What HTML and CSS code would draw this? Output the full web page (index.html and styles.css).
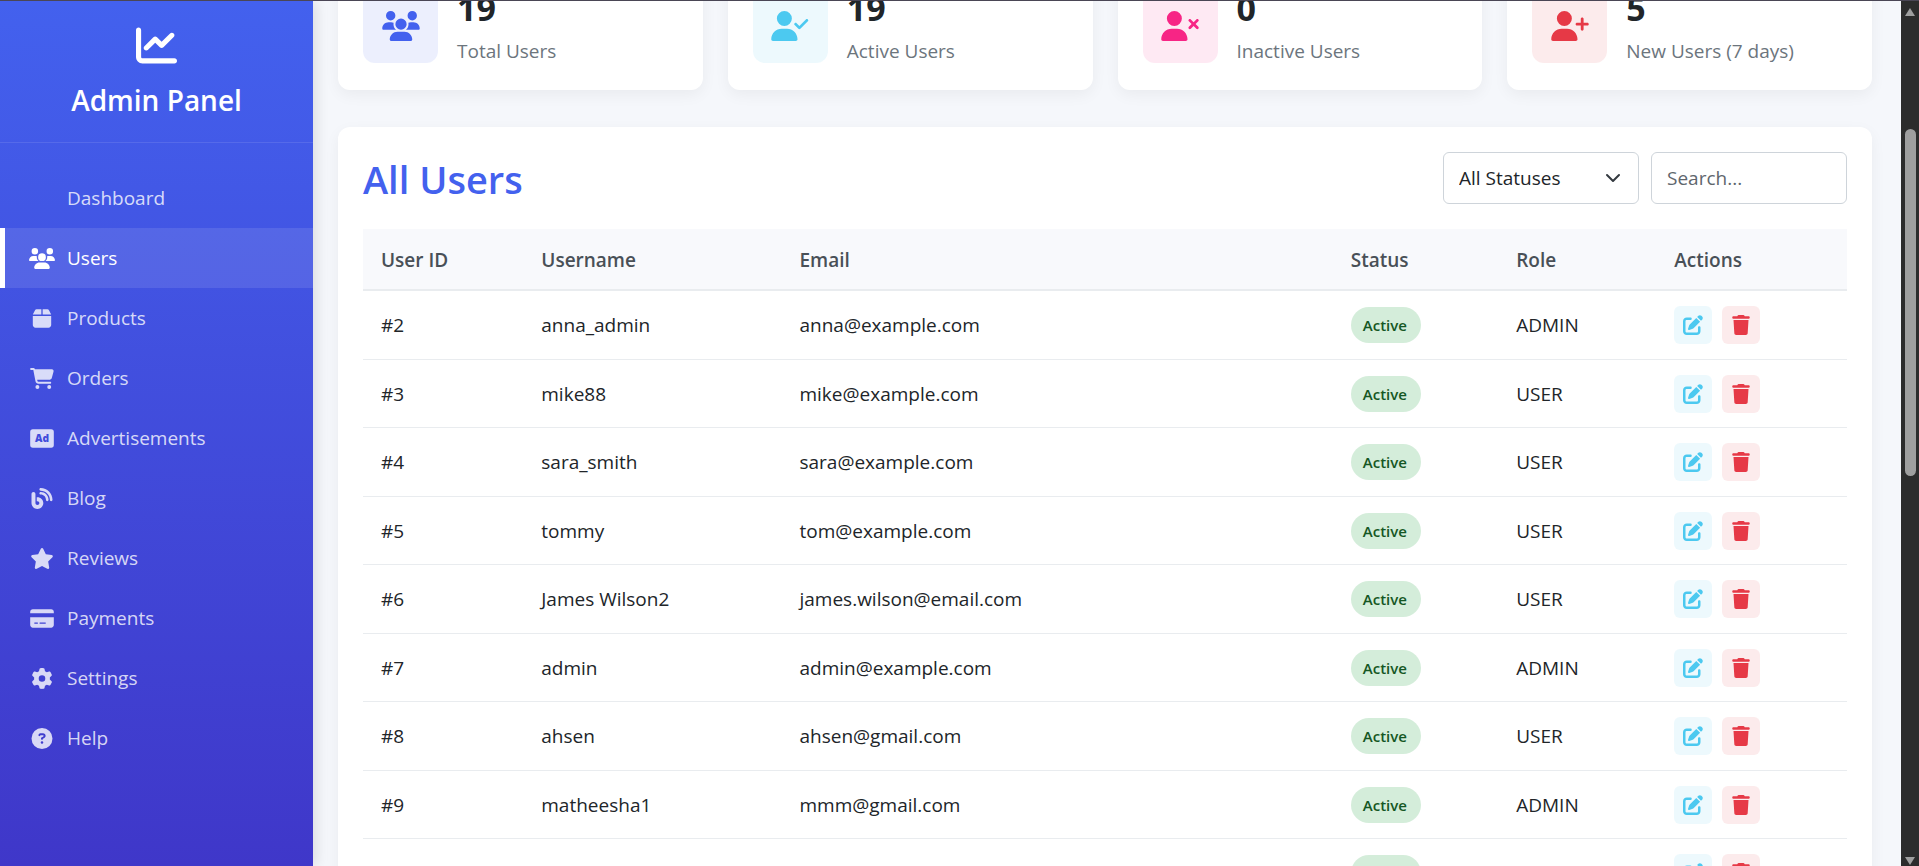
FILE: index.html
```html
<!DOCTYPE html>
<html lang="en">
<head>
<meta charset="utf-8">
<meta name="viewport" content="width=device-width, initial-scale=1">
<title>Admin Panel - Users</title>
<link rel="stylesheet" href="styles.css">
</head>
<body>
<svg class="sprite" aria-hidden="true">
  <symbol id="i-chart" viewBox="0 0 512 512"><path d="M64 64c0-17.700-14.300-32-32-32S0 46.300 0 64V400c0 44.200 35.800 80 80 80H480c17.700 0 32-14.300 32-32s-14.300-32-32-32H80c-8.800 0-16-7.200-16-16V64zm406.600 86.600c12.500-12.500 12.500-32.800 0-45.300s-32.800-12.500-45.300 0L320 210.700l-57.400-57.400c-12.500-12.500-32.800-12.500-45.300 0l-112 112c-12.500 12.500-12.500 32.800 0 45.300s32.800 12.500 45.300 0L240 221.300l57.400 57.400c12.500 12.500 32.800 12.500 45.300 0l128-128z"/></symbol>
  <symbol id="i-users" viewBox="0 0 640 512"><path d="M144 0a80 80 0 1 1 0 160A80 80 0 1 1 144 0zM512 0a80 80 0 1 1 0 160A80 80 0 1 1 512 0zM0 298.700C0 239.800 47.800 192 106.700 192h42.700c15.900 0 31 3.500 44.600 9.700c-1.300 7.200-1.900 14.700-1.900 22.300c0 38.200 16.800 72.500 43.300 96c-.2 0-.4 0-.7 0H21.300C9.600 320 0 310.400 0 298.700zM405.300 320c-.2 0-.4 0-.7 0c26.600-23.500 43.300-57.800 43.300-96c0-7.600-.7-15-1.900-22.300c13.600-6.300 28.700-9.700 44.600-9.700h42.700C592.200 192 640 239.800 640 298.700c0 11.800-9.600 21.300-21.300 21.300H405.300zM224 224a96 96 0 1 1 192 0 96 96 0 1 1 -192 0zM128 485.300C128 411.700 187.700 352 261.300 352H378.700C452.300 352 512 411.700 512 485.300c0 14.700-11.900 26.700-26.700 26.700H154.700c-14.700 0-26.700-11.900-26.700-26.700z"/></symbol>
  <symbol id="i-user-check" viewBox="0 0 640 512"><path d="M96 128a128 128 0 1 1 256 0A128 128 0 1 1 96 128zM0 482.300C0 383.800 79.800 304 178.300 304h91.400C368.200 304 448 383.800 448 482.300c0 16.400-13.300 29.700-29.700 29.700H29.700C13.300 512 0 498.700 0 482.300zM625 177L497 305c-9.400 9.400-24.600 9.400-33.900 0l-64-64c-9.400-9.400-9.400-24.600 0-33.900s24.600-9.400 33.900 0l47 47L591 143c9.400-9.400 24.600-9.400 33.900 0s9.400 24.600 0 33.900z"/></symbol>
  <symbol id="i-user-x" viewBox="0 0 640 512"><path d="M96 128a128 128 0 1 1 256 0A128 128 0 1 1 96 128zM0 482.300C0 383.800 79.800 304 178.300 304h91.400C368.200 304 448 383.800 448 482.300c0 16.400-13.300 29.700-29.700 29.700H29.700C13.300 512 0 498.700 0 482.300zM471 143c9.400-9.400 24.600-9.400 33.900 0l47 47 47-47c9.400-9.400 24.600-9.400 33.900 0s9.400 24.600 0 33.900l-47 47 47 47c9.400 9.400 9.400 24.600 0 33.900s-24.600 9.400-33.900 0l-47-47-47 47c-9.400 9.400-24.600 9.400-33.900 0s-9.400-24.600 0-33.900l47-47-47-47c-9.400-9.400-9.400-24.600 0-33.900z"/></symbol>
  <symbol id="i-user-plus" viewBox="0 0 640 512"><path d="M96 128a128 128 0 1 1 256 0A128 128 0 1 1 96 128zM0 482.300C0 383.800 79.800 304 178.300 304h91.400C368.200 304 448 383.800 448 482.300c0 16.400-13.300 29.700-29.700 29.700H29.700C13.300 512 0 498.700 0 482.300zM504 312V248H440c-13.300 0-24-10.700-24-24s10.700-24 24-24h64V136c0-13.300 10.700-24 24-24s24 10.700 24 24v64h64c13.300 0 24 10.700 24 24s-10.700 24-24 24H552v64c0 13.300-10.700 24-24 24s-24-10.700-24-24z"/></symbol>
  <symbol id="i-box" viewBox="0 0 448 512"><path d="M50.700 58.500L0 160H208V32H93.700C75.500 32 58.900 42.300 50.700 58.500zM240 160H448L397.300 58.500C389.100 42.300 372.500 32 354.300 32H240V160zm208 32H0V416c0 35.300 28.700 64 64 64H384c35.300 0 64-28.700 64-64V192z"/></symbol>
  <symbol id="i-cart" viewBox="0 0 576 512"><path d="M0 24C0 10.700 10.700 0 24 0H69.500c22 0 41.500 12.800 50.600 32h411c26.300 0 45.500 25 38.600 50.400l-41 152.300c-8.500 31.400-37 53.300-69.500 53.300H170.700l5.400 28.500c2.200 11.300 12.100 19.500 23.600 19.500H488c13.300 0 24 10.700 24 24s-10.700 24-24 24H199.700c-34.600 0-64.300-24.600-70.700-58.500L77.400 54.500c-.7-3.800-4-6.500-7.900-6.500H24C10.700 48 0 37.300 0 24zM128 464a48 48 0 1 1 96 0 48 48 0 1 1 -96 0zm336-48a48 48 0 1 1 0 96 48 48 0 1 1 0-96z"/></symbol>
  <symbol id="i-blog" viewBox="0 0 512 512"><path d="M192 32c0 17.700 14.300 32 32 32c123.700 0 224 100.300 224 224c0 17.700 14.300 32 32 32s32-14.300 32-32C512 128.900 383.100 0 224 0c-17.700 0-32 14.300-32 32zm0 96c0 17.700 14.300 32 32 32c70.700 0 128 57.300 128 128c0 17.700 14.300 32 32 32s32-14.300 32-32c0-106-86-192-192-192c-17.700 0-32 14.300-32 32zM96 144c0-26.500-21.500-48-48-48S0 117.500 0 144V368c0 79.500 64.500 144 144 144s144-64.500 144-144s-64.500-144-144-144H128v96h16c26.500 0 48 21.500 48 48s-21.500 48-48 48s-48-21.500-48-48V144z"/></symbol>
  <symbol id="i-star" viewBox="0 0 576 512"><path d="M316.900 18C311.600 7 300.400 0 288.100 0s-23.400 7-28.800 18L195 150.300 51.400 171.500c-12 1.800-22 10.200-25.700 21.700s-.7 24.200 7.900 32.700L137.800 329 113.200 474.700c-2 12 3 24.200 12.900 31.300s23 8 33.800 2.300l128.300-68.500 128.300 68.500c10.800 5.700 23.900 4.900 33.800-2.300s14.900-19.300 12.900-31.300L438.500 329 542.700 225.900c8.600-8.500 11.700-21.200 7.900-32.700s-13.700-19.900-25.700-21.700L381.200 150.300 316.900 18z"/></symbol>
  <symbol id="i-card" viewBox="0 0 576 512"><path d="M64 32C28.700 32 0 60.700 0 96v32H576V96c0-35.300-28.700-64-64-64H64zM576 224H0V416c0 35.300 28.700 64 64 64H512c35.300 0 64-28.700 64-64V224zM112 352h64c8.800 0 16 7.200 16 16s-7.200 16-16 16H112c-8.800 0-16-7.200-16-16s7.200-16 16-16zm112 16c0-8.800 7.200-16 16-16H368c8.800 0 16 7.200 16 16s-7.200 16-16 16H240c-8.800 0-16-7.200-16-16z"/></symbol>
  <symbol id="i-gear" viewBox="0 0 512 512"><path d="M495.900 166.600c3.200 8.700 .5 18.400-6.400 24.600l-43.300 39.400c1.100 8.300 1.700 16.800 1.700 25.400s-.6 17.100-1.700 25.400l43.300 39.400c6.900 6.200 9.600 15.900 6.400 24.600c-4.400 11.900-9.700 23.300-15.800 34.300l-4.700 8.100c-6.600 11-14 21.400-22.100 31.200c-5.900 7.200-15.700 9.600-24.500 6.800l-55.700-17.700c-13.400 10.300-28.200 18.900-44 25.400l-12.500 57.100c-2 9.100-9 16.300-18.200 17.800c-13.800 2.300-28 3.500-42.500 3.500s-28.700-1.200-42.500-3.500c-9.200-1.500-16.200-8.700-18.200-17.800l-12.500-57.100c-15.800-6.500-30.600-15.100-44-25.400L83.100 425.900c-8.800 2.800-18.600 .3-24.500-6.800c-8.100-9.800-15.500-20.200-22.100-31.200l-4.700-8.100c-6.100-11-11.400-22.400-15.800-34.300c-3.200-8.700-.5-18.400 6.400-24.600l43.300-39.400C64.600 273.100 64 264.600 64 256s.6-17.100 1.700-25.400L22.400 191.200c-6.900-6.200-9.600-15.900-6.400-24.600c4.400-11.900 9.700-23.300 15.800-34.300l4.700-8.100c6.600-11 14-21.400 22.100-31.200c5.900-7.200 15.700-9.600 24.500-6.800l55.700 17.700c13.400-10.300 28.200-18.900 44-25.400l12.500-57.100c2-9.100 9-16.300 18.200-17.800C227.300 1.200 241.500 0 256 0s28.700 1.200 42.500 3.500c9.200 1.500 16.200 8.700 18.200 17.800l12.500 57.100c15.800 6.500 30.600 15.100 44 25.400l55.700-17.700c8.800-2.800 18.600-.3 24.500 6.800c8.100 9.800 15.500 20.200 22.100 31.200l4.700 8.100c6.100 11 11.400 22.400 15.800 34.300zM256 336a80 80 0 1 0 0-160 80 80 0 1 0 0 160z"/></symbol>
  <symbol id="i-help" viewBox="0 0 512 512"><path d="M256 512A256 256 0 1 0 256 0a256 256 0 1 0 0 512zM169.800 165.300c7.900-22.300 29.100-37.300 52.800-37.300h58.300c34.900 0 63.100 28.300 63.100 63.100c0 22.600-12.100 43.500-31.700 54.800L280 264.400c-.2 13-10.900 23.600-24 23.600c-13.300 0-24-10.700-24-24V250.500c0-8.600 4.600-16.500 12.100-20.800l44.300-25.400c4.700-2.700 7.600-7.700 7.600-13.100c0-8.400-6.800-15.100-15.100-15.100H222.600c-3.400 0-6.400 2.100-7.500 5.300l-.4 1.200c-4.400 12.500-18.200 19-30.600 14.600s-19-18.200-14.600-30.600l.4-1.200zM224 352a32 32 0 1 1 64 0 32 32 0 1 1 -64 0z"/></symbol>
  <symbol id="i-edit" viewBox="0 0 512 512"><path d="M471.600 21.700c-21.900-21.900-57.300-21.900-79.200 0L362.300 51.700l97.900 97.900 30.100-30.100c21.900-21.900 21.900-57.300 0-79.200L471.600 21.700zm-299.200 220c-6.100 6.100-10.800 13.600-13.500 21.900l-29.600 88.800c-2.900 8.600-.6 18.100 5.800 24.600s15.900 8.700 24.600 5.800l88.800-29.600c8.200-2.700 15.700-7.400 21.900-13.500L437.700 172.300 339.700 74.300 172.400 241.700zM96 64C43 64 0 107 0 160V416c0 53 43 96 96 96H352c53 0 96-43 96-96V320c0-17.700-14.300-32-32-32s-32 14.300-32 32v96c0 17.700-14.300 32-32 32H96c-17.700 0-32-14.300-32-32V160c0-17.700 14.300-32 32-32h96c17.700 0 32-14.300 32-32s-14.300-32-32-32H96z"/></symbol>
  <symbol id="i-trash" viewBox="0 0 448 512"><path d="M135.200 17.700L128 32H32C14.300 32 0 46.300 0 64S14.300 96 32 96H416c17.700 0 32-14.300 32-32s-14.300-32-32-32H320l-7.200-14.300C307.400 6.800 296.300 0 284.200 0H163.800c-12.100 0-23.200 6.800-28.600 17.700zM416 128H32L53.200 467c1.600 25.300 22.600 45 47.900 45H346.900c25.300 0 46.300-19.700 47.900-45L416 128z"/></symbol>
</svg>

<aside class="sidebar">
  <div class="brand">
    <svg class="brand-icon" aria-hidden="true"><use href="#i-chart"/></svg>
    <h2 class="brand-name">Admin Panel</h2>
  </div>
  <nav class="nav">
    <a class="nav-link" href="#"><span class="nav-icon"></span>Dashboard</a>
    <a class="nav-link active" href="#" aria-current="page"><svg class="nav-icon" aria-hidden="true"><use href="#i-users"/></svg>Users</a>
    <a class="nav-link" href="#"><svg class="nav-icon" aria-hidden="true"><use href="#i-box"/></svg>Products</a>
    <a class="nav-link" href="#"><svg class="nav-icon" aria-hidden="true"><use href="#i-cart"/></svg>Orders</a>
    <a class="nav-link" href="#"><svg class="nav-icon" viewBox="0 0 576 512" aria-hidden="true"><rect y="32" width="576" height="448" rx="64"/><text class="ad-text" x="288" y="346" text-anchor="middle">Ad</text></svg>Advertisements</a>
    <a class="nav-link" href="#"><svg class="nav-icon" aria-hidden="true"><use href="#i-blog"/></svg>Blog</a>
    <a class="nav-link" href="#"><svg class="nav-icon" aria-hidden="true"><use href="#i-star"/></svg>Reviews</a>
    <a class="nav-link" href="#"><svg class="nav-icon" aria-hidden="true"><use href="#i-card"/></svg>Payments</a>
    <a class="nav-link" href="#"><svg class="nav-icon" aria-hidden="true"><use href="#i-gear"/></svg>Settings</a>
    <a class="nav-link" href="#"><svg class="nav-icon" aria-hidden="true"><use href="#i-help"/></svg>Help</a>
  </nav>
</aside>

<main class="main">
  <section class="stats">
    <div class="stat">
      <div class="stat-icon blue"><svg aria-hidden="true"><use href="#i-users"/></svg></div>
      <div><h3 class="stat-value">19</h3><p class="stat-label">Total Users</p></div>
    </div>
    <div class="stat">
      <div class="stat-icon cyan"><svg aria-hidden="true"><use href="#i-user-check"/></svg></div>
      <div><h3 class="stat-value">19</h3><p class="stat-label">Active Users</p></div>
    </div>
    <div class="stat">
      <div class="stat-icon pink"><svg aria-hidden="true"><use href="#i-user-x"/></svg></div>
      <div><h3 class="stat-value">0</h3><p class="stat-label">Inactive Users</p></div>
    </div>
    <div class="stat">
      <div class="stat-icon red"><svg aria-hidden="true"><use href="#i-user-plus"/></svg></div>
      <div><h3 class="stat-value">5</h3><p class="stat-label">New Users (7 days)</p></div>
    </div>
  </section>

  <section class="panel">
    <header class="panel-head">
      <h2 class="panel-title">All Users</h2>
      <div class="filters">
        <div class="select-wrap">
          <select class="field" aria-label="Filter by status">
            <option>All Statuses</option>
            <option>Active</option>
            <option>Inactive</option>
          </select>
          <svg class="chevron" viewBox="0 0 16 16" aria-hidden="true"><path d="m2 5 6 6 6-6"/></svg>
        </div>
        <input class="field" type="text" placeholder="Search..." aria-label="Search users">
      </div>
    </header>

    <table class="users">
      <colgroup><col class="c-id"><col class="c-name"><col class="c-email"><col class="c-status"><col class="c-role"><col class="c-actions"></colgroup>
      <thead>
        <tr><th>User ID</th><th>Username</th><th>Email</th><th>Status</th><th>Role</th><th>Actions</th></tr>
      </thead>
      <tbody>
        <tr><td>#2</td><td>anna_admin</td><td>anna@example.com</td><td><span class="badge">Active</span></td><td>ADMIN</td><td><div class="actions"><button class="btn cyan" aria-label="Edit"><svg aria-hidden="true"><use href="#i-edit"/></svg></button><button class="btn red" aria-label="Delete"><svg aria-hidden="true"><use href="#i-trash"/></svg></button></div></td></tr>
        <tr><td>#3</td><td>mike88</td><td>mike@example.com</td><td><span class="badge">Active</span></td><td>USER</td><td><div class="actions"><button class="btn cyan" aria-label="Edit"><svg aria-hidden="true"><use href="#i-edit"/></svg></button><button class="btn red" aria-label="Delete"><svg aria-hidden="true"><use href="#i-trash"/></svg></button></div></td></tr>
        <tr><td>#4</td><td>sara_smith</td><td>sara@example.com</td><td><span class="badge">Active</span></td><td>USER</td><td><div class="actions"><button class="btn cyan" aria-label="Edit"><svg aria-hidden="true"><use href="#i-edit"/></svg></button><button class="btn red" aria-label="Delete"><svg aria-hidden="true"><use href="#i-trash"/></svg></button></div></td></tr>
        <tr><td>#5</td><td>tommy</td><td>tom@example.com</td><td><span class="badge">Active</span></td><td>USER</td><td><div class="actions"><button class="btn cyan" aria-label="Edit"><svg aria-hidden="true"><use href="#i-edit"/></svg></button><button class="btn red" aria-label="Delete"><svg aria-hidden="true"><use href="#i-trash"/></svg></button></div></td></tr>
        <tr><td>#6</td><td>James Wilson2</td><td>james.wilson@email.com</td><td><span class="badge">Active</span></td><td>USER</td><td><div class="actions"><button class="btn cyan" aria-label="Edit"><svg aria-hidden="true"><use href="#i-edit"/></svg></button><button class="btn red" aria-label="Delete"><svg aria-hidden="true"><use href="#i-trash"/></svg></button></div></td></tr>
        <tr><td>#7</td><td>admin</td><td>admin@example.com</td><td><span class="badge">Active</span></td><td>ADMIN</td><td><div class="actions"><button class="btn cyan" aria-label="Edit"><svg aria-hidden="true"><use href="#i-edit"/></svg></button><button class="btn red" aria-label="Delete"><svg aria-hidden="true"><use href="#i-trash"/></svg></button></div></td></tr>
        <tr><td>#8</td><td>ahsen</td><td>ahsen@gmail.com</td><td><span class="badge">Active</span></td><td>USER</td><td><div class="actions"><button class="btn cyan" aria-label="Edit"><svg aria-hidden="true"><use href="#i-edit"/></svg></button><button class="btn red" aria-label="Delete"><svg aria-hidden="true"><use href="#i-trash"/></svg></button></div></td></tr>
        <tr><td>#9</td><td>matheesha1</td><td>mmm@gmail.com</td><td><span class="badge">Active</span></td><td>ADMIN</td><td><div class="actions"><button class="btn cyan" aria-label="Edit"><svg aria-hidden="true"><use href="#i-edit"/></svg></button><button class="btn red" aria-label="Delete"><svg aria-hidden="true"><use href="#i-trash"/></svg></button></div></td></tr>
        <tr><td></td><td></td><td></td><td><span class="badge"></span></td><td></td><td><div class="actions"><button class="btn cyan" aria-label="Edit"><svg aria-hidden="true"><use href="#i-edit"/></svg></button><button class="btn red" aria-label="Delete"><svg aria-hidden="true"><use href="#i-trash"/></svg></button></div></td></tr>
      </tbody>
    </table>
  </section>
</main>

<div class="scrollbar" aria-hidden="true">
  <svg class="arrow" viewBox="0 0 12 10"><path d="M6 1 11 9H1z"/></svg>
  <div class="track"><div class="thumb"></div></div>
  <svg class="arrow" viewBox="0 0 12 10"><path d="M6 9 1 1H11z"/></svg>
</div>
</body>
</html>
```

FILE: styles.css
```css
:root {
  --primary: #4361ee;
  --primary-dark: #3f37c9;
  --page: #f5f7fb;
  --ink: #212529;
  --muted: #6c757d;
  --line: #e9ecef;
}

* {
  box-sizing: border-box;
}

body {
  display: flex;
  height: 100vh;
  margin: 0;
  overflow: hidden;
  border-top: 1px solid #4a4655;
  background: var(--page);
  color: var(--ink);
  font-family: "Open Sans", "Noto Sans", sans-serif;
  font-size: 19px;
  line-height: 30px;
}

h2,
h3,
p {
  margin: 0;
}

svg {
  display: block;
  fill: currentColor;
}

.sprite {
  position: absolute;
  width: 0;
  height: 0;
}

/* Sidebar */

.sidebar {
  position: relative;
  z-index: 1;
  flex: 0 0 313px;
  background: linear-gradient(180deg, var(--primary), var(--primary-dark));
  box-shadow: 4px 0 12px rgba(0, 0, 0, 0.1);
  color: #fff;
}

.brand {
  display: flex;
  flex-direction: column;
  align-items: center;
  gap: 16px;
  padding: 24px;
  border-bottom: 1px solid rgba(255, 255, 255, 0.1);
}

.brand-icon {
  width: 41px;
  height: 41px;
}

.brand-name {
  font-size: 28px;
  font-weight: 600;
  line-height: 36px;
}

.nav {
  padding-top: 25px;
}

.nav-link {
  display: flex;
  align-items: center;
  gap: 12px;
  height: 60px;
  padding-left: 24px;
  border-left: 5px solid transparent;
  color: rgba(255, 255, 255, 0.8);
  text-decoration: none;
}

.nav-link.active {
  border-left-color: #fff;
  background: rgba(255, 255, 255, 0.1);
  color: #fff;
}

.nav-icon {
  width: 26px;
  height: 21px;
}

.ad-text {
  fill: #414bdb;
  font-size: 250px;
  font-weight: 800;
}

/* Main column */

.main {
  flex: 1;
  min-width: 0;
  padding: 0 29px 0 25px;
  overflow: hidden;
}

.stats {
  display: grid;
  grid-template-columns: repeat(4, 1fr);
  gap: 25px;
  margin: -40px 0 37px;
}

.stat {
  display: flex;
  align-items: center;
  gap: 19px;
  height: 129px;
  padding: 0 25px;
  border-radius: 12px;
  background: #fff;
  box-shadow: 0 5px 15px rgba(0, 0, 0, 0.05);
}

.stat-icon {
  display: grid;
  place-items: center;
  width: 75px;
  height: 75px;
  border-radius: 12px;
}

.stat-icon svg {
  width: 38px;
  height: 30px;
}

.stat-value {
  padding-top: 2px;
  margin-bottom: 7px;
  font-size: 34px;
  font-weight: 700;
  line-height: 42px;
}

.stat-label {
  color: var(--muted);
}

.blue {
  background: rgba(67, 97, 238, 0.1);
  color: #4361ee;
}

.cyan {
  background: rgba(76, 201, 240, 0.1);
  color: #4cc9f0;
}

.pink {
  background: rgba(247, 37, 133, 0.1);
  color: #f72585;
}

.red {
  background: rgba(230, 57, 70, 0.1);
  color: #e63946;
}

.panel {
  padding: 25px;
  border-radius: 12px;
  background: #fff;
  box-shadow: 0 5px 15px rgba(0, 0, 0, 0.05);
}

.panel-head {
  display: flex;
  align-items: center;
  justify-content: space-between;
  margin-bottom: 25px;
}

.panel-title {
  padding-top: 2px;
  color: var(--primary);
  font-size: 38px;
  font-weight: 600;
  line-height: 48px;
}

.filters {
  display: flex;
  gap: 12px;
}

.field {
  width: 196px;
  height: 52px;
  margin: 0;
  padding: 0 15px;
  border: 1px solid #ced4da;
  border-radius: 6px;
  background: #fff;
  color: var(--ink);
  font: inherit;
  appearance: none;
}

.field::placeholder {
  color: #5f666d;
  opacity: 1;
}

.select-wrap {
  display: grid;
  align-items: center;
}

.select-wrap > * {
  grid-area: 1 / 1;
}

.chevron {
  justify-self: end;
  width: 16px;
  height: 16px;
  margin-right: 18px;
  fill: none;
  stroke: #343a40;
  stroke-width: 2;
  stroke-linecap: round;
  stroke-linejoin: round;
  pointer-events: none;
}

/* Users table */

.users {
  width: 100%;
  border-collapse: separate;
  border-spacing: 0;
  table-layout: fixed;
}

.c-id { width: 10.8%; }
.c-name { width: 17.4%; }
.c-email { width: 37.15%; }
.c-status { width: 11.15%; }
.c-role { width: 10.65%; }
.c-actions { width: 12.85%; }

.users th,
.users td {
  padding: 0 18px;
  text-align: left;
  vertical-align: middle;
}

.users th {
  height: 62px;
  padding-top: 2px;
  border-bottom: 2px solid var(--line);
  background: #f8f9fc;
  color: #495057;
  font-weight: 600;
}

.users td {
  height: 68px;
  border-bottom: 1px solid var(--line);
}

.users tr:nth-child(odd) td {
  height: 69px;
}

.badge {
  display: block;
  width: fit-content;
  min-width: 70px;
  height: 36px;
  padding: 0 12px;
  border-radius: 18px;
  background: #d4edda;
  color: #155724;
  font-size: 15px;
  font-weight: 600;
  line-height: 36px;
}

.actions {
  display: flex;
  gap: 10px;
}

.btn {
  display: grid;
  place-items: center;
  width: 38px;
  height: 38px;
  padding: 0;
  border: 0;
  border-radius: 6px;
}

.btn svg {
  width: 20px;
  height: 20px;
}

/* Window scroll rail */

.scrollbar {
  display: flex;
  flex: 0 0 18px;
  flex-direction: column;
  align-items: center;
  padding: 6px 0 0;
  background: #2c2c2c;
  color: #9f9f9f;
}

.arrow {
  width: 12px;
  height: 10px;
}

.track {
  flex: 1;
  padding-top: 112px;
}

.thumb {
  width: 11px;
  height: 347px;
  border-radius: 6px;
  background: #9f9f9f;
}
```
